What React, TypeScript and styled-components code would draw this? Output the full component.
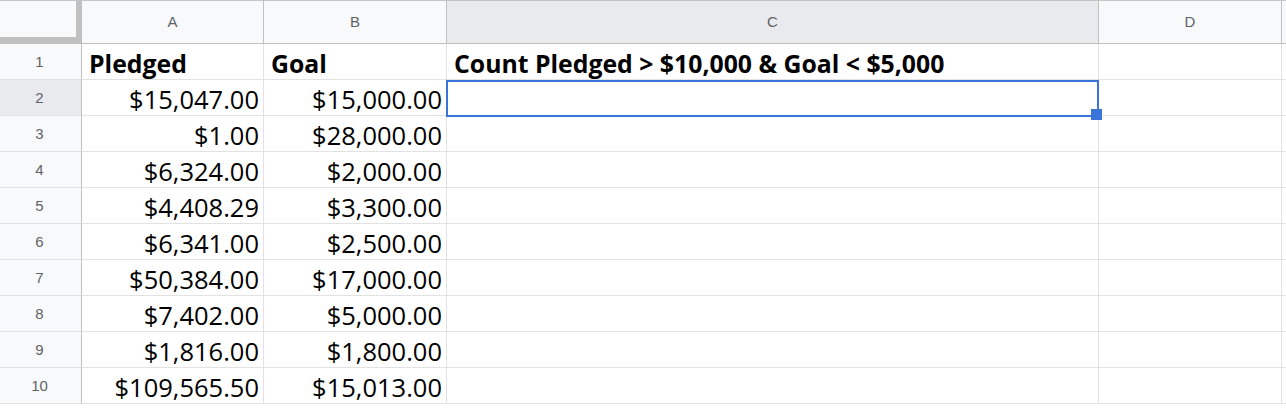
import React from "react";
import styled, { createGlobalStyle } from "styled-components";

const Global = createGlobalStyle`
  html, body { margin: 0; padding: 0; background: #ffffff; }
  body { width: 1286px; height: 408px; overflow: hidden; }
`;

const Sheet = styled.div`
  display: grid;
  grid-template-columns: 82px 182px 183px 652px 183px 1fr;
  grid-template-rows: 44px repeat(10, 36px);
  width: 1286px;
  font-family: "Open Sans", "Noto Sans", sans-serif;
`;

const Corner = styled.div`
  box-sizing: border-box;
  background: #f8f9fa;
  border-top: 1px solid #c4c7c5;
  border-right: 6px solid #c0c0c0;
  border-bottom: 7px solid #c0c0c0;
`;

const ColHeader = styled.div<{ $selected?: boolean }>`
  box-sizing: border-box;
  display: flex;
  align-items: center;
  justify-content: center;
  padding-bottom: 1px;
  background: ${(p) => (p.$selected ? "#e8eaed" : "#f8f9fa")};
  border-top: 1px solid #c4c7c5;
  border-right: 1px solid #c0c0c0;
  border-bottom: 1px solid #c0c0c0;
  color: #5f6368;
  font-family: "Liberation Sans", Arial, sans-serif;
  font-size: 15px;
`;

const RowHeader = styled.div<{ $selected?: boolean }>`
  box-sizing: border-box;
  display: flex;
  align-items: center;
  justify-content: center;
  padding-right: 2px;
  background: ${(p) => (p.$selected ? "#e8eaed" : "#f8f9fa")};
  border-right: 1px solid #c0c0c0;
  border-bottom: 1px solid #e2e2e3;
  color: #5f6368;
  font-family: "Liberation Sans", Arial, sans-serif;
  font-size: 15px;
`;

const Cell = styled.div<{ $align?: "left" | "right"; $bold?: boolean }>`
  position: relative;
  box-sizing: border-box;
  display: flex;
  align-items: flex-end;
  justify-content: ${(p) => (p.$align === "right" ? "flex-end" : "flex-start")};
  padding: 0 4px 0 7px;
  background: #ffffff;
  border-right: 1px solid #e2e2e3;
  border-bottom: 1px solid #e2e2e3;
  color: #000000;
  font-size: ${(p) => (p.$bold ? "24.8px" : "25.5px")};
  line-height: 32px;
  font-weight: ${(p) => (p.$bold ? 700 : 400)};
  white-space: nowrap;
`;

const Selection = styled.div`
  position: absolute;
  z-index: 2;
  left: -1px;
  right: -1px;
  top: 0;
  bottom: -2px;
  border: 2px solid #3b74d8;
  pointer-events: none;
`;

const FillHandle = styled.div`
  position: absolute;
  z-index: 3;
  left: 644px;
  top: 29px;
  width: 11px;
  height: 11px;
  background: #3b74d8;
`;

const cols = ["A", "B", "C", "D", ""];

const data: [string, string][] = [
  ["$15,047.00", "$15,000.00"],
  ["$1.00", "$28,000.00"],
  ["$6,324.00", "$2,000.00"],
  ["$4,408.29", "$3,300.00"],
  ["$6,341.00", "$2,500.00"],
  ["$50,384.00", "$17,000.00"],
  ["$7,402.00", "$5,000.00"],
  ["$1,816.00", "$1,800.00"],
  ["$109,565.50", "$15,013.00"],
];

export default function App() {
  return (
    <>
      <Global />
      <Sheet>
        <Corner />
        {cols.map((c, i) => (
          <ColHeader key={i} $selected={c === "C"}>
            {c}
          </ColHeader>
        ))}

        <RowHeader>1</RowHeader>
        <Cell $bold>Pledged</Cell>
        <Cell $bold>Goal</Cell>
        <Cell $bold>Count Pledged &gt; $10,000 &amp; Goal &lt; $5,000</Cell>
        <Cell />
        <Cell />

        {data.map(([a, b], i) => {
          const row = i + 2;
          return (
            <React.Fragment key={row}>
              <RowHeader $selected={row === 2}>{row}</RowHeader>
              <Cell $align="right">{a}</Cell>
              <Cell $align="right">{b}</Cell>
              <Cell>
                {row === 2 && (
                  <>
                    <Selection />
                    <FillHandle />
                  </>
                )}
              </Cell>
              <Cell />
              <Cell />
            </React.Fragment>
          );
        })}
      </Sheet>
    </>
  );
}
